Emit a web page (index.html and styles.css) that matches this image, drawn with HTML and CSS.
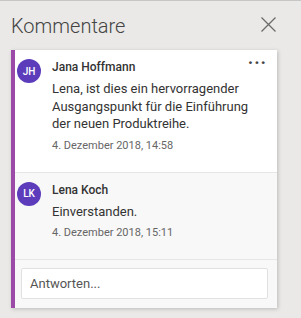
FILE: index.html
```html
<!DOCTYPE html>
<html lang="de">
<head>
    <meta charset="UTF-8">
    <meta name="viewport" content="width=device-width, initial-scale=1.0">
    <title>Kommentare</title>
    <link rel="stylesheet" href="styles.css">
</head>
<body>
    <div class="pane">
        <div class="pane-header">
            <div class="pane-title">Kommentare</div>
            <button class="close-button" title="Schließen">
                <svg width="15" height="15" viewBox="0 0 15 15">
                    <path d="M0.5 0.5 L14.5 14.5 M14.5 0.5 L0.5 14.5" stroke="#6b6b6b" stroke-width="1.3" fill="none"/>
                </svg>
            </button>
        </div>

        <div class="thread">
            <div class="comment">
                <div class="avatar">JH</div>
                <div class="comment-body">
                    <div class="author">Jana Hoffmann</div>
                    <div class="text">Lena, ist dies ein hervorragender Ausgangspunkt für die Einführung der neuen Produktreihe.</div>
                    <div class="date">4. Dezember 2018, 14:58</div>
                </div>
                <div class="more">&middot;&middot;&middot;</div>
            </div>
            <div class="comment reply">
                <div class="avatar">LK</div>
                <div class="comment-body">
                    <div class="author">Lena Koch</div>
                    <div class="text">Einverstanden.</div>
                    <div class="date">4. Dezember 2018, 15:11</div>
                </div>
            </div>
            <div class="reply-box">
                <div class="reply-input">Antworten...</div>
            </div>
        </div>
    </div>
</body>
</html>
```

FILE: styles.css
```css
body {
    margin: 0;
    font-family: Roboto, "Noto Sans", sans-serif;
    background-color: #eae9e7;
    border-top: 1px solid #c6c6c6;
    height: 317px;
    overflow: hidden;
}
.pane {
    display: flex;
    flex-direction: column;
}
.pane-header {
    display: flex;
    align-items: center;
    justify-content: space-between;
    height: 49px;
    padding: 0 25px 0 11px;
}
.pane-title {
    font-size: 20px;
    font-weight: 300;
    color: #444;
}
.close-button {
    background: none;
    border: none;
    padding: 0;
    width: 15px;
    height: 15px;
    display: flex;
    margin-top: -2px;
}
.thread {
    margin-left: 11px;
    width: 266px;
    height: 258px;
    background-color: #f8f8f8;
    border-left: 4px solid #9b4aa8;
    box-shadow: 1px 1px 4px rgba(0, 0, 0, 0.2);
    box-sizing: border-box;
    display: flex;
    flex-direction: column;
}
.comment {
    display: flex;
    align-items: flex-start;
    padding: 8px 0 18px 2px;
    background-color: #fff;
    border-bottom: 1px solid #e6e6e6;
    position: relative;
}
.comment.reply {
    background-color: #f8f8f8;
    padding-bottom: 17.5px;
}
.avatar {
    width: 24px;
    height: 24px;
    margin-top: 1px;
    border-radius: 50%;
    background-color: #5c3cbb;
    color: #fff;
    font-size: 10px;
    font-weight: 500;
    display: flex;
    align-items: center;
    justify-content: center;
    flex-shrink: 0;
}
.comment-body {
    margin-left: 11px;
    flex: 1;
    padding-right: 22px;
}
.author {
    font-size: 12px;
    font-weight: 500;
    color: #333;
    line-height: 18px;
}
.text {
    font-size: 13px;
    color: #333;
    line-height: 17.5px;
    margin-top: 4px;
}
.date {
    font-size: 11px;
    color: #666;
    line-height: 16px;
    margin-top: 5px;
}
.more {
    position: absolute;
    top: 2px;
    right: 10px;
    font-size: 18px;
    font-weight: 700;
    color: #444;
    letter-spacing: 1px;
}
.reply-box {
    padding: 8px 9px 0 6px;
}
.reply-input {
    height: 31px;
    box-sizing: border-box;
    background-color: #fff;
    border: 1px solid #e1e1e1;
    border-radius: 2px;
    padding: 0 8px;
    display: flex;
    align-items: center;
    font-size: 13px;
    color: #555;
}
```
